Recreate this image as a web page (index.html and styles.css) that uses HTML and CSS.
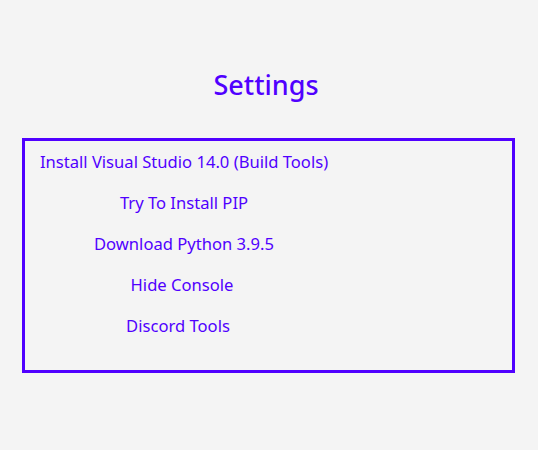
FILE: index.html
```html
<!DOCTYPE html>
<html>
<head>
<meta charset="utf-8">
<link rel="stylesheet" href="styles.css">
</head>
<body>
<div class="page">
  <h1 class="title">Settings</h1>
  <div class="panel">
    <div class="list">
      <div class="item">Install Visual Studio 14.0 (Build Tools)</div>
      <div class="item">Try To Install PIP</div>
      <div class="item">Download Python 3.9.5</div>
      <div class="item item-shift-sm">Hide Console</div>
      <div class="item item-shift">Discord Tools</div>
    </div>
  </div>
</div>
</body>
</html>
```
FILE: styles.css
```css
html, body {
  margin: 0;
  padding: 0;
  background: #f4f4f4;
}
.page {
  width: 538px;
  height: 450px;
  font-family: "Noto Sans", "Open Sans", sans-serif;
  color: #5000ff;
  display: flex;
  flex-direction: column;
}
.title {
  margin: 67px 0 0 0;
  text-align: center;
  font-weight: 500;
  font-size: 27px;
  line-height: 36px;
  height: 36px;
  padding-right: 6px;
}
.panel {
  margin: 35px 0 0 22px;
  width: 493px;
  height: 235px;
  box-sizing: border-box;
  border: 3px solid #5000ff;
}
.list {
  width: 318px;
  padding-top: 0;
  display: flex;
  flex-direction: column;
  align-items: center;
}
.item {
  font-size: 16.6px;
  line-height: 41px;
  height: 41px;
  white-space: nowrap;
}
.item-shift-sm {
  padding-right: 4px;
}
.item-shift {
  padding-right: 12px;
}
```
